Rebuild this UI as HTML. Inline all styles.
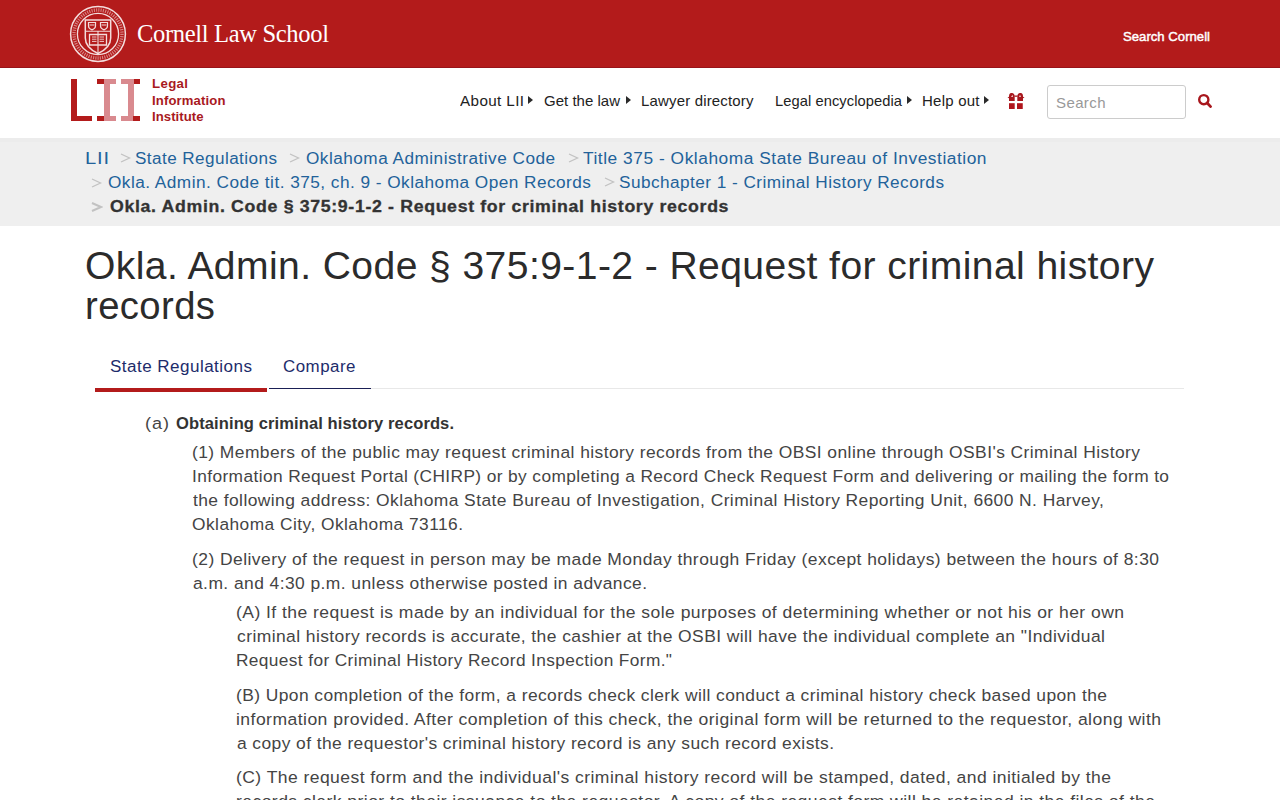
<!DOCTYPE html>
<html><head><meta charset="utf-8"><title>Okla. Admin. Code § 375:9-1-2 - Request for criminal history records</title>
<style>
html,body{margin:0;padding:0;background:#fff;width:1280px;height:800px;overflow:hidden;position:relative;font-family:"Liberation Sans", sans-serif;}
.t{position:absolute;white-space:pre;margin:0;padding:0;transform-origin:0 0;}
.abs{position:absolute;}
#topbar{position:absolute;left:0;top:0;width:1280px;height:67px;background:#b31b1b;border-bottom:1px solid #98141a;}
#crumbs{position:absolute;left:0;top:138px;width:1280px;height:88px;background:#efefef;}
#crumbs:before{content:"";position:absolute;left:0;top:0;width:1280px;height:4px;background:#ececec;}
.tri{position:absolute;width:0;height:0;border-top:4.8px solid transparent;border-bottom:4.8px solid transparent;border-left:5.4px solid #2a2a2a;}
.sep{position:absolute;}
</style></head><body>
<div id="topbar"></div>
<svg class="abs" style="left:66px;top:2px" width="64" height="64" viewBox="0 0 64 64">
  <g fill="none" stroke="#f4dcdc">
    <circle cx="32" cy="32" r="27.4" stroke-width="1.5"/>
    <circle cx="32" cy="32" r="20.6" stroke-width="1.3"/>
    <circle cx="32" cy="32" r="24" stroke-width="3.4" stroke-dasharray="1.1 1.2" opacity=".55"/>
  </g>
  <path d="M19.3 18 H44.7 V36 C44.7 44 38.5 48.5 32 51.5 C25.5 48.5 19.3 44 19.3 36 Z" fill="none" stroke="#f4dcdc" stroke-width="1.5"/>
  <path d="M19.3 29.3 H44.7 M32 29.3 V51.5" stroke="#f4dcdc" stroke-width="1.1"/>
  <path d="M22.5 20.5 h7 v3.6 c0 2-1.8 3.2-3.5 3.8 c-1.7-.6-3.5-1.8-3.5-3.8z M34.5 20.5 h7 v3.6 c0 2-1.8 3.2-3.5 3.8 c-1.7-.6-3.5-1.8-3.5-3.8z" fill="none" stroke="#f4dcdc" stroke-width="1.2"/>
  <path d="M23.5 23h5M35.5 23h5" stroke="#f4dcdc" stroke-width="1"/>
  <path d="M23.5 32.5 h17 v10.5 h-17z" fill="none" stroke="#f4dcdc" stroke-width="1.3"/>
  <path d="M26 35h4.5M26 37.2h4.5M26 39.4h4.5M33.5 35h4.5M33.5 37.2h4.5M33.5 39.4h4.5" stroke="#f4dcdc" stroke-width=".9"/>
</svg>
<div id="crumbs"></div>
<!-- LII logo -->
<div class="abs" style="left:71px;top:79px;width:6px;height:42px;background:#b31b1b"></div>
<div class="abs" style="left:71px;top:116px;width:21px;height:5px;background:#b31b1b"></div>
<div class="abs" style="left:97px;top:79px;width:19px;height:5px;background:#d98a8f"></div>
<div class="abs" style="left:97px;top:79px;width:7px;height:5px;background:#b31b1b"></div>
<div class="abs" style="left:104px;top:79px;width:6px;height:42px;background:#d98a8f"></div>
<div class="abs" style="left:97px;top:116px;width:19px;height:5px;background:#d98a8f"></div>
<div class="abs" style="left:97px;top:116px;width:7px;height:5px;background:#b31b1b"></div>
<div class="abs" style="left:121px;top:79px;width:19px;height:5px;background:#d98a8f"></div>
<div class="abs" style="left:133px;top:79px;width:7px;height:5px;background:#b31b1b"></div>
<div class="abs" style="left:128px;top:79px;width:6px;height:42px;background:#d98a8f"></div>
<div class="abs" style="left:121px;top:116px;width:19px;height:5px;background:#d98a8f"></div>
<div class="abs" style="left:133px;top:116px;width:7px;height:5px;background:#b31b1b"></div>
<!-- nav triangles -->
<div class="tri" style="left:528px;top:96.2px"></div>
<div class="tri" style="left:626px;top:96.2px"></div>
<div class="tri" style="left:907px;top:96.2px"></div>
<div class="tri" style="left:984px;top:96.2px"></div>
<!-- gift -->
<svg class="abs" style="left:1000px;top:86px" width="32" height="28" viewBox="0 0 32 28">
  <path d="M9 15 V10 C9 7.5 10.5 7 12 7 C13.5 7 14.7 8.5 14.7 10 V15 Z" fill="#a8171d"/>
  <path d="M17.3 15 V10 C17.3 8.5 18.5 7 20 7 C21.5 7 23 7.5 23 10 V15 Z" fill="#a8171d"/>
  <path d="M7.5 11.5 L9.5 10.5 V12.5 Z M24.5 11.5 L22.5 10.5 V12.5 Z" fill="#a8171d"/>
  <path d="M14.5 9.5 L17.5 9.5 L17.5 10.8 L14.5 10.8Z" fill="#a8171d"/>
  <path d="M11 11 L12.5 8.8 L13 11Z M19 11 L20 8.8 L21 11Z" fill="#f6d4d4"/>
  <rect x="9" y="17.2" width="5.7" height="5.8" fill="#b0151c"/>
  <rect x="17" y="17.2" width="5.75" height="5.8" fill="#b0151c"/>
</svg>
<!-- search box -->
<div class="abs" style="left:1047px;top:85px;width:137px;height:32px;border:1px solid #ccc;border-radius:3px;background:#fff"></div>
<svg class="abs" style="left:1196px;top:93px" width="18" height="16" viewBox="0 0 18 16">
  <circle cx="7.8" cy="6.7" r="4.6" fill="none" stroke="#a8171d" stroke-width="2.4"/>
  <path d="M11.2 10 L14.6 13.6" stroke="#a8171d" stroke-width="2.8" stroke-linecap="round"/>
</svg>
<!-- breadcrumb separators -->
<svg class="abs" style="left:119.5px;top:153px" width="12" height="11" viewBox="0 0 12 11"><path d="M1 1 L9.5 5 L1 9" fill="none" stroke="#c2c2c2" stroke-width="1.3"/></svg>
<svg class="abs" style="left:288.5px;top:153px" width="12" height="11" viewBox="0 0 12 11"><path d="M1 1 L9.5 5 L1 9" fill="none" stroke="#c2c2c2" stroke-width="1.3"/></svg>
<svg class="abs" style="left:567.5px;top:153px" width="12" height="11" viewBox="0 0 12 11"><path d="M1 1 L9.5 5 L1 9" fill="none" stroke="#c2c2c2" stroke-width="1.3"/></svg>
<svg class="abs" style="left:90.6px;top:177.5px" width="12" height="11" viewBox="0 0 12 11"><path d="M1 1 L9.5 5 L1 9" fill="none" stroke="#c2c2c2" stroke-width="1.3"/></svg>
<svg class="abs" style="left:603.5px;top:177px" width="12" height="11" viewBox="0 0 12 11"><path d="M1 1 L9.5 5 L1 9" fill="none" stroke="#c2c2c2" stroke-width="1.3"/></svg>
<svg class="abs" style="left:90.6px;top:201.5px" width="12" height="11" viewBox="0 0 12 11"><path d="M1 1 L10 5 L1 9" fill="none" stroke="#c2c2c2" stroke-width="2.0"/></svg>
<!-- tabs -->
<div class="abs" style="left:95px;top:388px;width:172px;height:4px;background:#b31b1b"></div>
<div class="abs" style="left:269px;top:388px;width:102px;height:1px;background:#1a1f55"></div>
<div class="abs" style="left:371px;top:388px;width:813px;height:1px;background:#e8e8e8"></div>
<div class="t" id="t0" style="left:137.00px;top:17.95px;font-size:25.5px;line-height:31.88px;font-weight:400;color:#fff;font-family:'Liberation Serif', serif;transform:scaleX(0.9636);letter-spacing:-0.361px;">Cornell Law School</div>
<div class="t" id="t1" style="left:1123.00px;top:29.27px;font-size:13px;line-height:16.25px;font-weight:400;color:#fff;font-family:'Liberation Sans', sans-serif;transform:scaleX(1.0102);letter-spacing:0.009px;-webkit-text-stroke:0.45px #fff;">Search Cornell</div>
<div class="t" id="t2" style="left:151.50px;top:75.87px;font-size:13px;line-height:16.25px;font-weight:700;color:#a8191e;font-family:'Liberation Sans', sans-serif;transform:scaleX(1.0199);letter-spacing:0.332px;">Legal</div>
<div class="t" id="t3" style="left:151.50px;top:92.67px;font-size:13px;line-height:16.25px;font-weight:700;color:#a8191e;font-family:'Liberation Sans', sans-serif;transform:scaleX(1.0092);letter-spacing:0.133px;">Information</div>
<div class="t" id="t4" style="left:151.50px;top:109.37px;font-size:13px;line-height:16.25px;font-weight:700;color:#a8191e;font-family:'Liberation Sans', sans-serif;transform:scaleX(1.0124);letter-spacing:0.039px;">Institute</div>
<div class="t" id="t5" style="left:460.00px;top:91.92px;font-size:14.5px;line-height:18.12px;font-weight:400;color:#222;font-family:'Liberation Sans', sans-serif;transform:scaleX(1.0507);letter-spacing:0.358px;">About LII</div>
<div class="t" id="t6" style="left:543.50px;top:91.92px;font-size:14.5px;line-height:18.12px;font-weight:400;color:#222;font-family:'Liberation Sans', sans-serif;transform:scaleX(1.0319);letter-spacing:0.031px;">Get the law</div>
<div class="t" id="t7" style="left:640.50px;top:91.92px;font-size:14.5px;line-height:18.12px;font-weight:400;color:#222;font-family:'Liberation Sans', sans-serif;transform:scaleX(1.0327);letter-spacing:0.171px;">Lawyer directory</div>
<div class="t" id="t8" style="left:774.50px;top:91.92px;font-size:14.5px;line-height:18.12px;font-weight:400;color:#222;font-family:'Liberation Sans', sans-serif;transform:scaleX(1.0126);letter-spacing:0.074px;">Legal encyclopedia</div>
<div class="t" id="t9" style="left:921.50px;top:91.92px;font-size:14.5px;line-height:18.12px;font-weight:400;color:#222;font-family:'Liberation Sans', sans-serif;transform:scaleX(1.0334);letter-spacing:0.232px;">Help out</div>
<div class="t" id="t10" style="left:1056.00px;top:93.72px;font-size:14.5px;line-height:18.12px;font-weight:400;color:#999;font-family:'Liberation Sans', sans-serif;transform:scaleX(1.0353);letter-spacing:0.372px;">Search</div>
<div class="t" id="t11" style="left:85.00px;top:149.46px;font-size:16px;line-height:20.0px;font-weight:400;color:#22629a;font-family:'Liberation Sans', sans-serif;transform:scaleX(1.2586);letter-spacing:0.636px;">LII</div>
<div class="t" id="t12" style="left:135.00px;top:149.46px;font-size:16px;line-height:20.0px;font-weight:400;color:#22629a;font-family:'Liberation Sans', sans-serif;transform:scaleX(1.0674);letter-spacing:0.420px;">State Regulations</div>
<div class="t" id="t13" style="left:306.00px;top:149.46px;font-size:16px;line-height:20.0px;font-weight:400;color:#22629a;font-family:'Liberation Sans', sans-serif;transform:scaleX(1.0735);letter-spacing:0.456px;">Oklahoma Administrative Code</div>
<div class="t" id="t14" style="left:583.00px;top:149.46px;font-size:16px;line-height:20.0px;font-weight:400;color:#22629a;font-family:'Liberation Sans', sans-serif;transform:scaleX(1.0841);letter-spacing:0.485px;">Title 375 - Oklahoma State Bureau of Investiation</div>
<div class="t" id="t15" style="left:108.00px;top:173.46px;font-size:16px;line-height:20.0px;font-weight:400;color:#22629a;font-family:'Liberation Sans', sans-serif;transform:scaleX(1.0762);letter-spacing:0.439px;">Okla. Admin. Code tit. 375, ch. 9 - Oklahoma Open Records</div>
<div class="t" id="t16" style="left:619.00px;top:173.46px;font-size:16px;line-height:20.0px;font-weight:400;color:#22629a;font-family:'Liberation Sans', sans-serif;transform:scaleX(1.0747);letter-spacing:0.423px;">Subchapter 1 - Criminal History Records</div>
<div class="t" id="t17" style="left:110.00px;top:197.26px;font-size:16px;line-height:20.0px;font-weight:700;color:#333;font-family:'Liberation Sans', sans-serif;transform:scaleX(1.1069);letter-spacing:0.598px;-webkit-text-stroke:0.3px #333;">Okla. Admin. Code § 375:9-1-2 - Request for criminal history records</div>
<div class="t" id="t18" style="left:85.00px;top:242.68px;font-size:38px;line-height:47.5px;font-weight:400;color:#2b2b2b;font-family:'Liberation Sans', sans-serif;transform:scaleX(1.0283);letter-spacing:0.401px;">Okla. Admin. Code § 375:9-1-2 - Request for criminal history</div>
<div class="t" id="t19" style="left:85.00px;top:282.58px;font-size:38px;line-height:47.5px;font-weight:400;color:#2b2b2b;font-family:'Liberation Sans', sans-serif;transform:scaleX(1.0073);letter-spacing:0.390px;">records</div>
<div class="t" id="t20" style="left:110.00px;top:356.76px;font-size:16px;line-height:20.0px;font-weight:400;color:#1d2c6b;font-family:'Liberation Sans', sans-serif;transform:scaleX(1.0657);letter-spacing:0.433px;">State Regulations</div>
<div class="t" id="t21" style="left:283.00px;top:356.76px;font-size:16px;line-height:20.0px;font-weight:400;color:#1d2c6b;font-family:'Liberation Sans', sans-serif;transform:scaleX(1.0559);letter-spacing:0.475px;">Compare</div>
<div class="t" id="t22" style="left:145.00px;top:413.16px;font-size:16.3px;line-height:20.38px;font-weight:400;color:#444;font-family:'Liberation Sans', sans-serif;transform:scaleX(1.1076);letter-spacing:0.881px;">(a)</div>
<div class="t" id="t23" style="left:176.00px;top:413.16px;font-size:16.3px;line-height:20.38px;font-weight:700;color:#333;font-family:'Liberation Sans', sans-serif;transform:scaleX(1.0148);letter-spacing:0.101px;">Obtaining criminal history records.</div>
<div class="t" id="t24" style="left:192.00px;top:442.16px;font-size:16.3px;line-height:20.38px;font-weight:400;color:#444;font-family:'Liberation Sans', sans-serif;transform:scaleX(1.0706);letter-spacing:0.398px;">(1) Members of the public may request criminal history records from the OBSI online through OSBI's Criminal History</div>
<div class="t" id="t25" style="left:192.00px;top:466.16px;font-size:16.3px;line-height:20.38px;font-weight:400;color:#444;font-family:'Liberation Sans', sans-serif;transform:scaleX(1.0634);letter-spacing:0.369px;">Information Request Portal (CHIRP) or by completing a Record Check Request Form and delivering or mailing the form to</div>
<div class="t" id="t26" style="left:193.00px;top:490.16px;font-size:16.3px;line-height:20.38px;font-weight:400;color:#444;font-family:'Liberation Sans', sans-serif;transform:scaleX(1.0702);letter-spacing:0.394px;">the following address: Oklahoma State Bureau of Investigation, Criminal History Reporting Unit, 6600 N. Harvey,</div>
<div class="t" id="t27" style="left:192.00px;top:514.16px;font-size:16.3px;line-height:20.38px;font-weight:400;color:#444;font-family:'Liberation Sans', sans-serif;transform:scaleX(1.0638);letter-spacing:0.442px;">Oklahoma City, Oklahoma 73116.</div>
<div class="t" id="t28" style="left:192.00px;top:549.16px;font-size:16.3px;line-height:20.38px;font-weight:400;color:#444;font-family:'Liberation Sans', sans-serif;transform:scaleX(1.0725);letter-spacing:0.415px;">(2) Delivery of the request in person may be made Monday through Friday (except holidays) between the hours of 8:30</div>
<div class="t" id="t29" style="left:193.00px;top:573.16px;font-size:16.3px;line-height:20.38px;font-weight:400;color:#444;font-family:'Liberation Sans', sans-serif;transform:scaleX(1.0700);letter-spacing:0.407px;">a.m. and 4:30 p.m. unless otherwise posted in advance.</div>
<div class="t" id="t30" style="left:236.00px;top:602.16px;font-size:16.3px;line-height:20.38px;font-weight:400;color:#444;font-family:'Liberation Sans', sans-serif;transform:scaleX(1.0764);letter-spacing:0.420px;">(A) If the request is made by an individual for the sole purposes of determining whether or not his or her own</div>
<div class="t" id="t31" style="left:237.00px;top:626.16px;font-size:16.3px;line-height:20.38px;font-weight:400;color:#444;font-family:'Liberation Sans', sans-serif;transform:scaleX(1.0728);letter-spacing:0.387px;">criminal history records is accurate, the cashier at the OSBI will have the individual complete an "Individual</div>
<div class="t" id="t32" style="left:236.00px;top:650.16px;font-size:16.3px;line-height:20.38px;font-weight:400;color:#444;font-family:'Liberation Sans', sans-serif;transform:scaleX(1.0612);letter-spacing:0.360px;">Request for Criminal History Record Inspection Form."</div>
<div class="t" id="t33" style="left:236.00px;top:684.96px;font-size:16.3px;line-height:20.38px;font-weight:400;color:#444;font-family:'Liberation Sans', sans-serif;transform:scaleX(1.0697);letter-spacing:0.391px;">(B) Upon completion of the form, a records check clerk will conduct a criminal history check based upon the</div>
<div class="t" id="t34" style="left:236.00px;top:708.96px;font-size:16.3px;line-height:20.38px;font-weight:400;color:#444;font-family:'Liberation Sans', sans-serif;transform:scaleX(1.0787);letter-spacing:0.418px;">information provided. After completion of this check, the original form will be returned to the requestor, along with</div>
<div class="t" id="t35" style="left:237.00px;top:732.76px;font-size:16.3px;line-height:20.38px;font-weight:400;color:#444;font-family:'Liberation Sans', sans-serif;transform:scaleX(1.0704);letter-spacing:0.385px;">a copy of the requestor's criminal history record is any such record exists.</div>
<div class="t" id="t36" style="left:236.00px;top:767.16px;font-size:16.3px;line-height:20.38px;font-weight:400;color:#444;font-family:'Liberation Sans', sans-serif;transform:scaleX(1.0760);letter-spacing:0.411px;">(C) The request form and the individual's criminal history record will be stamped, dated, and initialed by the</div>
<div class="t" id="t37" style="left:236.00px;top:791.16px;font-size:16.3px;line-height:20.38px;font-weight:400;color:#444;font-family:'Liberation Sans', sans-serif;transform:scaleX(1.0767);letter-spacing:0.407px;">records clerk prior to their issuance to the requestor. A copy of the request form will be retained in the files of the</div>
</body></html>
